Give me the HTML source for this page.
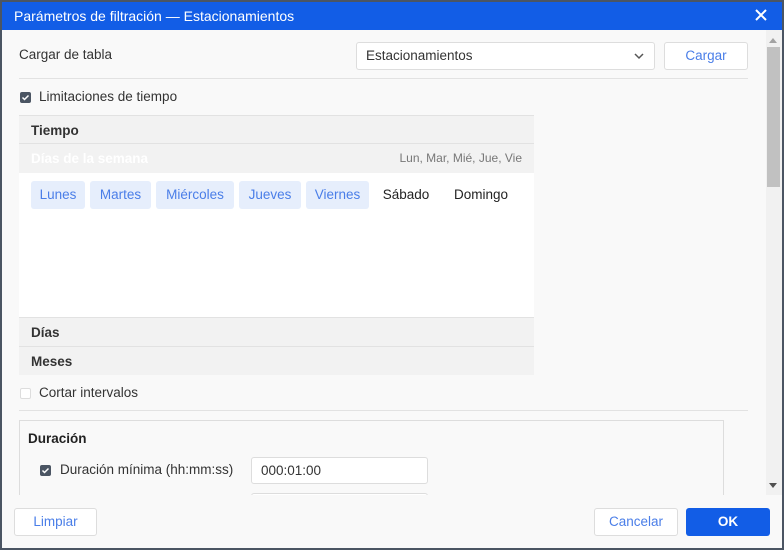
<!DOCTYPE html>
<html><head><meta charset="utf-8"><style>
*{box-sizing:border-box;margin:0;padding:0}
body{width:784px;height:550px;background:#4b5563;font-family:"Liberation Sans",sans-serif;font-size:13.5px;color:#333;position:relative;overflow:hidden}
.dlg{position:absolute;left:2px;top:2px;width:780px;height:546px;background:#f9f9f9;overflow:hidden}
.title{height:28px;background:#125de6;color:#fff;font-size:14px;line-height:28px;padding-left:12px}
.x{position:absolute;right:14px;top:6px;width:14px;height:14px}
.abs{position:absolute}
.sel{left:354px;top:40px;width:299px;height:28px;border:1px solid #ddd;border-radius:3px;background:#fff;padding-left:9px;line-height:26px}
.btn{border:1px solid #ddd;border-radius:3px;background:#fff;color:#4a7ee8;text-align:center}
.hr{height:1px;background:#e2e2e2}
.cb{width:11px;height:11px;border-radius:2px;background:#4b5563}
.cb svg{display:block}
.sec{left:17px;width:515px;background:#f2f2f2;font-weight:bold;padding-left:12px;color:#333}
.chip{position:absolute;top:179px;height:28px;line-height:28px;text-align:center;background:#e6eefc;color:#4a7ee8;border-radius:3px}
.inp{left:249px;width:177px;height:27px;border:1px solid #ddd;border-radius:3px;background:#fff;padding-left:9px;line-height:25px}
</style></head><body><div class="dlg">
<div class="title">Parámetros de filtración — Estacionamientos</div>
<svg class="x" viewBox="0 0 14 14"><path d="M2 2L12 12M12 2L2 12" stroke="#fff" stroke-width="2"/></svg>
<div class="abs" style="left:17px;top:45px">Cargar de tabla</div>
<div class="abs sel">Estacionamientos<svg class="abs" style="right:10px;top:10px" width="10" height="7" viewBox="0 0 10 7"><path d="M1 1L5 5L9 1" stroke="#555" stroke-width="1.5" fill="none"/></svg></div>
<div class="abs btn" style="left:662px;top:40px;width:84px;height:28px;line-height:26px">Cargar</div>
<div class="abs hr" style="left:17px;top:76px;width:729px"></div>
<div class="abs cb" style="left:18px;top:90px"><svg width="11" height="11" viewBox="0 0 11 11"><path d="M2.5 5.5L4.5 7.5L8.5 3.5" stroke="#fff" stroke-width="1.5" fill="none"/></svg></div>
<div class="abs" style="left:37px;top:87px">Limitaciones de tiempo</div>
<div class="abs sec" style="top:113px;height:29px;line-height:29px;border-top:1px solid #e2e2e2;border-bottom:1px solid #e2e2e2">Tiempo</div>
<div class="abs sec" style="top:142px;height:29px;line-height:29px;color:#fff;background:#f2f2f2">Días de la semana<span style="position:absolute;right:12px;font-weight:normal;font-size:12px;color:#777">Lun, Mar, Mié, Jue, Vie</span></div>
<div class="abs" style="left:17px;top:171px;width:515px;height:144px;background:#fff"></div>
<div class="chip" style="left:29px;width:54px">Lunes</div>
<div class="chip" style="left:88px;width:61px">Martes</div>
<div class="chip" style="left:154px;width:78px">Miércoles</div>
<div class="chip" style="left:237px;width:62px">Jueves</div>
<div class="chip" style="left:304px;width:63px">Viernes</div>
<div class="chip" style="left:373px;width:62px;background:none;color:#222">Sábado</div>
<div class="chip" style="left:443px;width:72px;background:none;color:#222">Domingo</div>
<div class="abs sec" style="top:315px;height:29px;line-height:29px;border-top:1px solid #e2e2e2">Días</div>
<div class="abs sec" style="top:344px;height:29px;line-height:29px;border-top:1px solid #e2e2e2">Meses</div>
<div class="abs" style="left:18px;top:386px;width:11px;height:11px;border:1px solid #ddd;border-radius:2px;background:#fff"></div>
<div class="abs" style="left:37px;top:383px">Cortar intervalos</div>
<div class="abs hr" style="left:17px;top:408px;width:729px"></div>
<div class="abs" style="left:17px;top:418px;width:705px;height:90px;border:1px solid #ddd;border-bottom:none"></div>
<div class="abs" style="left:26px;top:429px;font-weight:bold;color:#222">Duración</div>
<div class="abs cb" style="left:38px;top:463px"><svg width="11" height="11" viewBox="0 0 11 11"><path d="M2.5 5.5L4.5 7.5L8.5 3.5" stroke="#fff" stroke-width="1.5" fill="none"/></svg></div>
<div class="abs" style="left:58px;top:460px">Duración mínima (hh:mm:ss)</div>
<div class="abs inp" style="top:455px">000:01:00</div>
<div class="abs inp" style="top:491px"></div>
<div class="abs" style="left:0;top:493px;width:780px;height:53px;background:#f9f9f9"></div>
<div class="abs" style="left:764px;top:28px;width:16px;height:465px;background:#f1f1f1"></div>
<div class="abs" style="left:765px;top:45px;width:13px;height:140px;background:#c1c1c1"></div>
<svg class="abs" style="left:767px;top:36px" width="8" height="5"><path d="M0 5L4 0L8 5Z" fill="#a3a3a3"/></svg>
<svg class="abs" style="left:767px;top:481px" width="8" height="5"><path d="M0 0L4 5L8 0Z" fill="#505050"/></svg>
<div class="abs btn" style="left:12px;top:506px;width:83px;height:28px;line-height:26px">Limpiar</div>
<div class="abs btn" style="left:592px;top:506px;width:84px;height:28px;line-height:26px">Cancelar</div>
<div class="abs" style="left:684px;top:506px;width:84px;height:28px;line-height:28px;background:#125de6;color:#fff;border-radius:3px;text-align:center;font-weight:bold">OK</div>
</div></body></html>
